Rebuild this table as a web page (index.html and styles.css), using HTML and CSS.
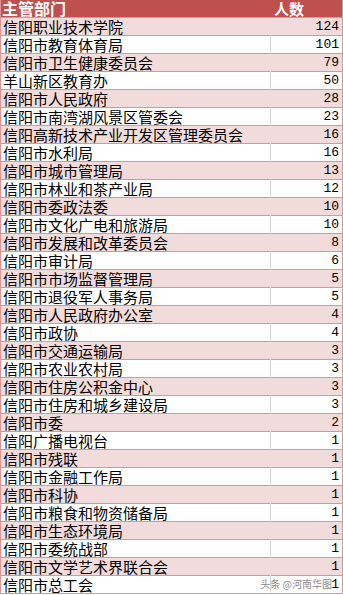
FILE: index.html
```html
<!DOCTYPE html>
<html lang="zh">
<head>
<meta charset="utf-8">
<link rel="stylesheet" href="styles.css">
</head>
<body>
<div class="table">
  <div class="row head"><div class="c1">主管部门</div><div class="c2">人数</div></div>
  <div class="row odd"><div class="c1">信阳职业技术学院</div><div class="c2">124</div></div>
  <div class="row"><div class="c1">信阳市教育体育局</div><div class="c2">101</div></div>
  <div class="row odd"><div class="c1">信阳市卫生健康委员会</div><div class="c2">79</div></div>
  <div class="row"><div class="c1">羊山新区教育办</div><div class="c2">50</div></div>
  <div class="row odd"><div class="c1">信阳市人民政府</div><div class="c2">28</div></div>
  <div class="row"><div class="c1">信阳市南湾湖风景区管委会</div><div class="c2">23</div></div>
  <div class="row odd"><div class="c1">信阳高新技术产业开发区管理委员会</div><div class="c2">16</div></div>
  <div class="row"><div class="c1">信阳市水利局</div><div class="c2">16</div></div>
  <div class="row odd"><div class="c1">信阳市城市管理局</div><div class="c2">13</div></div>
  <div class="row"><div class="c1">信阳市林业和茶产业局</div><div class="c2">12</div></div>
  <div class="row odd"><div class="c1">信阳市委政法委</div><div class="c2">10</div></div>
  <div class="row"><div class="c1">信阳市文化广电和旅游局</div><div class="c2">10</div></div>
  <div class="row odd"><div class="c1">信阳市发展和改革委员会</div><div class="c2">8</div></div>
  <div class="row"><div class="c1">信阳市审计局</div><div class="c2">6</div></div>
  <div class="row odd"><div class="c1">信阳市市场监督管理局</div><div class="c2">5</div></div>
  <div class="row"><div class="c1">信阳市退役军人事务局</div><div class="c2">5</div></div>
  <div class="row odd"><div class="c1">信阳市人民政府办公室</div><div class="c2">4</div></div>
  <div class="row"><div class="c1">信阳市政协</div><div class="c2">4</div></div>
  <div class="row odd"><div class="c1">信阳市交通运输局</div><div class="c2">3</div></div>
  <div class="row"><div class="c1">信阳市农业农村局</div><div class="c2">3</div></div>
  <div class="row odd"><div class="c1">信阳市住房公积金中心</div><div class="c2">3</div></div>
  <div class="row"><div class="c1">信阳市住房和城乡建设局</div><div class="c2">3</div></div>
  <div class="row odd"><div class="c1">信阳市委</div><div class="c2">2</div></div>
  <div class="row"><div class="c1">信阳广播电视台</div><div class="c2">1</div></div>
  <div class="row odd"><div class="c1">信阳市残联</div><div class="c2">1</div></div>
  <div class="row"><div class="c1">信阳市金融工作局</div><div class="c2">1</div></div>
  <div class="row odd"><div class="c1">信阳市科协</div><div class="c2">1</div></div>
  <div class="row"><div class="c1">信阳市粮食和物资储备局</div><div class="c2">1</div></div>
  <div class="row odd"><div class="c1">信阳市生态环境局</div><div class="c2">1</div></div>
  <div class="row"><div class="c1">信阳市委统战部</div><div class="c2">1</div></div>
  <div class="row odd"><div class="c1">信阳市文学艺术界联合会</div><div class="c2">1</div></div>
  <div class="row last"><div class="c1">信阳市总工会</div><div class="c2">1</div><span class="mark">头条 @河南华图</span></div>
</div>
</body>
</html>
```
FILE: styles.css
```css
html, body {
  margin: 0;
  padding: 0;
  background: #ffffff;
}
.table {
  width: 343px;
  box-sizing: border-box;
  border-left: 1px solid #da9694;
  border-right: 1px solid #da9694;
  font-family: "Noto Sans CJK SC", "Noto Sans", sans-serif;
  font-size: 15px;
  color: #000;
}
.row {
  display: grid;
  grid-template-columns: 269px 1fr;
  height: 18px;
  box-sizing: border-box;
  border-bottom: 1px solid #da9694;
  line-height: 17px;
  position: relative;
  background: #ffffff;
}
.row.odd {
  background: #f2dcdb;
}
.row .c1 {
  padding-left: 2px;
  white-space: nowrap;
  overflow: hidden;
}
.row .c2 {
  text-align: right;
  padding-right: 3px;
  border-left: 1px solid #d4d4d4;
  font-family: "Liberation Mono", monospace;
  font-size: 13px;
  line-height: 18px;
}
.row.odd .c2 {
  border-left-color: #f2dcdb;
}
.row.head {
  background: #c0504d;
  color: #ffffff;
  font-weight: bold;
  font-size: 16px;
}
.row.head .c1 {
  padding-left: 1px;
}
.row.head .c2 {
  border-left-color: #c0504d;
  text-align: left;
  padding-left: 3px;
  font-family: "Noto Sans CJK SC", sans-serif;
  font-size: 15px;
  line-height: 17px;
}
.mark {
  position: absolute;
  right: 10px;
  top: 3px;
  font-size: 10px;
  line-height: 10px;
  color: #8a8a8a;
  font-family: "Noto Sans CJK SC", sans-serif;
}
```
